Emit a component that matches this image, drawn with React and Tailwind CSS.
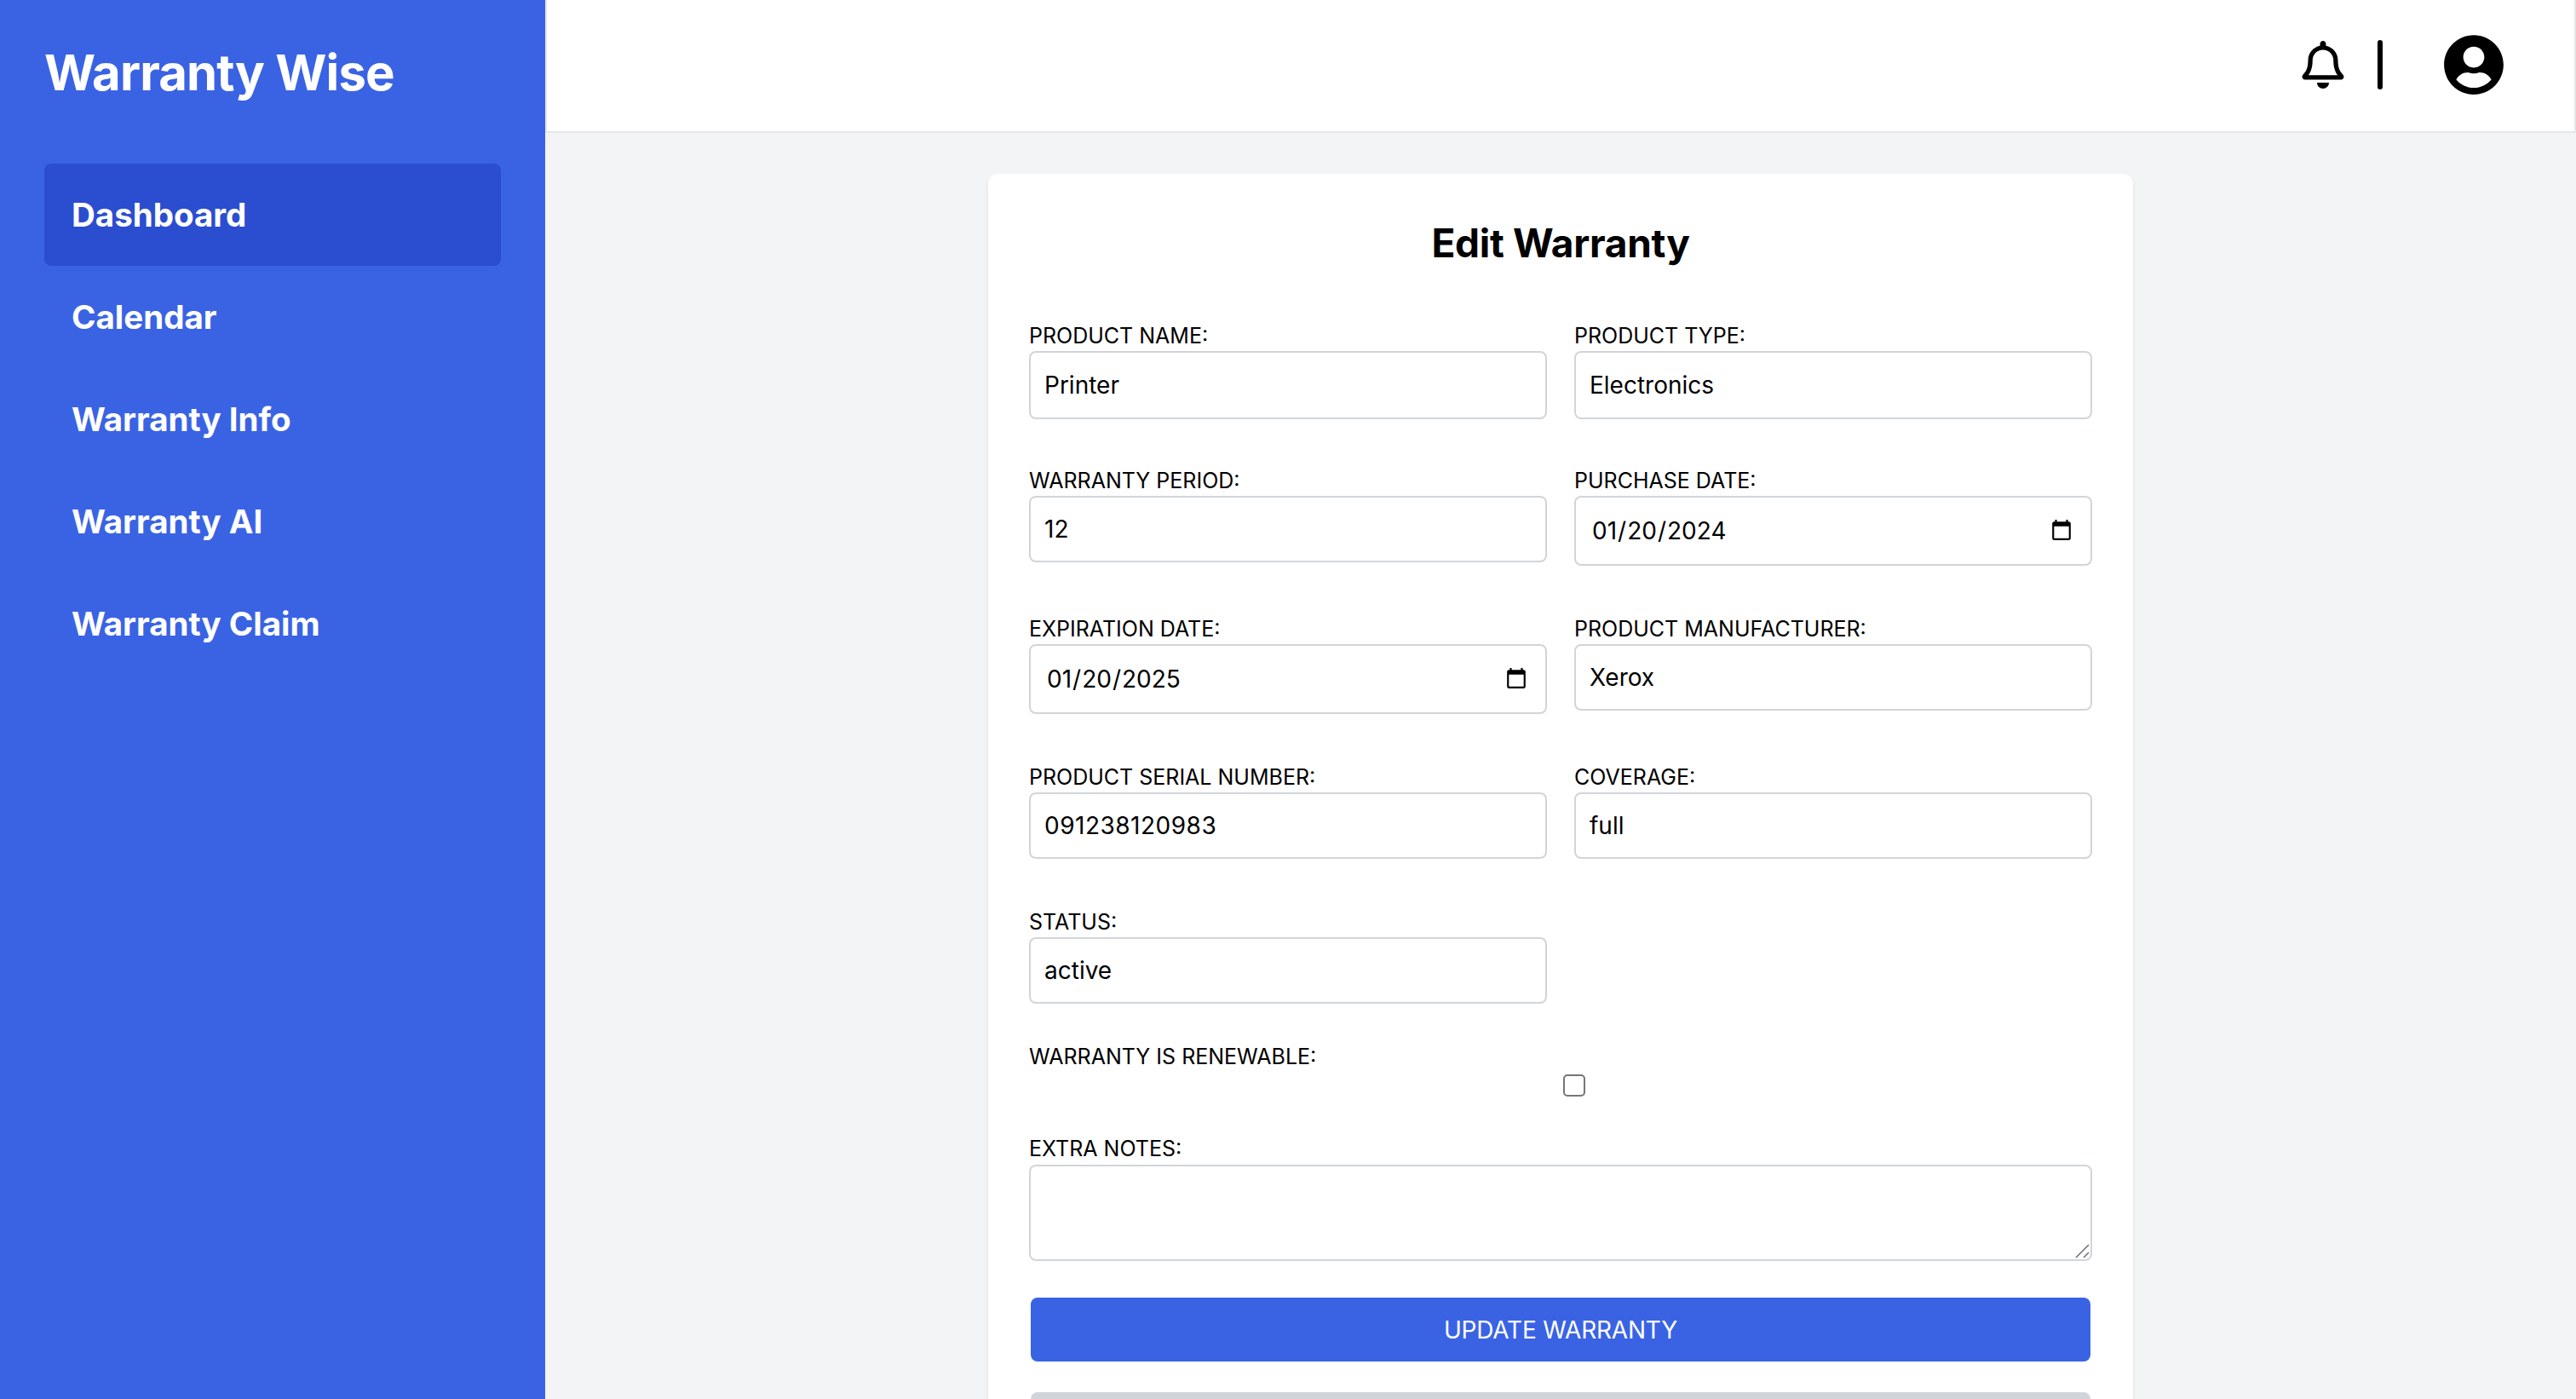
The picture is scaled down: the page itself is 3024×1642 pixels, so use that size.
import { FaRegBell, FaUserCircle } from 'react-icons/fa';

const navItems = ['Dashboard', 'Calendar', 'Warranty Info', 'Warranty AI', 'Warranty Claim'];

const Field = ({ label, value, type = 'text', firstRow = false, digits = false }) => (
  <div className="flex flex-col">
    <label className="h-[40px] text-[25px] leading-[44px] uppercase">{label}</label>
    <input
      type={type}
      defaultValue={value}
      className={`w-full rounded-[8px] border-2 border-[#d1d5db] bg-white text-[28px] text-black outline-none ${
        type === 'date' ? 'h-[82px] px-[18px]' : 'px-[16px]'
      } ${firstRow ? '-mb-[2px] h-[80px]' : ''} ${type !== 'date' && !firstRow ? 'h-[78px]' : ''} ${
        digits ? 'tracking-[0.5px]' : ''
      }`}
    />
  </div>
);

const App = () => {
  return (
    <div className="flex h-screen overflow-hidden bg-[#f3f4f6] font-['Inter',sans-serif] text-black">
      <aside className="w-[640px] shrink-0 bg-[#3a63e4] px-[52px] pt-[48px] text-white">
        <h1 className="mb-[70px] text-[58px] leading-[74px] font-bold tracking-[-0.8px]">Warranty Wise</h1>
        <nav className="flex flex-col">
          {navItems.map((item, index) => (
            <a
              key={item}
              className={`flex h-[120px] items-center rounded-[8px] px-[32px] pt-[2px] text-[38.5px] font-bold ${
                index === 0 ? 'bg-[#2b4dcf]' : ''
              }`}
            >
              {item}
            </a>
          ))}
        </nav>
      </aside>

      <div className="flex min-w-0 flex-1 flex-col">
        <header className="flex h-[156px] shrink-0 items-center justify-end border-2 border-t-0 border-[#e5e7eb] bg-white pr-[82px] pb-[2px]">
          <FaRegBell size={56} />
          <div className="mr-[71px] ml-[36px] h-[58px] w-[6px] rounded-full bg-black" />
          <FaUserCircle size={72} />
        </header>

        <main className="flex flex-1 justify-center overflow-hidden pt-[48px]">
          <div className="h-fit w-[1344px] shrink-0 rounded-[12px] bg-white px-[48px] pt-[48px] pb-[48px] shadow-md">
            <h2 className="mb-[54px] text-center text-[46px] leading-[66px] font-bold tracking-[-0.3px]">Edit Warranty</h2>

            <div className="grid grid-cols-2 items-start gap-x-[32px] gap-y-[52px]">
              <Field label="Product Name:" value="Printer" firstRow />
              <Field label="Product Type:" value="Electronics" firstRow />
              <Field label="Warranty Period:" value="12" />
              <Field label="Purchase Date:" value="2024-01-20" type="date" />
              <Field label="Expiration Date:" value="2025-01-20" type="date" />
              <Field label="Product Manufacturer:" value="Xerox" />
              <Field label="Product Serial Number:" value="091238120983" digits />
              <Field label="Coverage:" value="full" />
              <Field label="Status:" value="active" />
            </div>

            <div className="mt-[40px] flex flex-col">
              <label className="h-[40px] text-[25px] leading-[44px] uppercase">Warranty is renewable:</label>
              <input
                type="checkbox"
                className="mt-[3px] ml-[627px] h-[26px] w-[26px] appearance-none rounded-[5px] border-2 border-[#767676] bg-white"
              />
            </div>

            <div className="mt-[39px] flex flex-col">
              <label className="h-[40px] text-[25px] leading-[44px] uppercase">Extra Notes:</label>
              <div className="relative mt-[1px] h-[113px]">
                <textarea className="h-full w-full resize-none rounded-[8px] border-2 border-[#d1d5db] bg-white outline-none" />
                <svg className="absolute right-[2px] bottom-[2px] h-[20px] w-[20px]" viewBox="0 0 20 20" stroke="#666" strokeWidth="1.5">
                  <line x1="3" y1="18" x2="18" y2="3" />
                  <line x1="12" y1="18" x2="18" y2="12" />
                </svg>
              </div>
            </div>

            <div className="mx-[2px] mt-[43px] flex flex-col gap-[36px]">
              <button className="h-[75px] rounded-[8px] bg-[#3a63e4] text-[28px] tracking-[-0.2px] text-white uppercase">Update Warranty</button>
              <button className="h-[75px] rounded-[8px] bg-[#d1d5db]" />
            </div>
          </div>
        </main>
      </div>
    </div>
  );
};

export default App;
